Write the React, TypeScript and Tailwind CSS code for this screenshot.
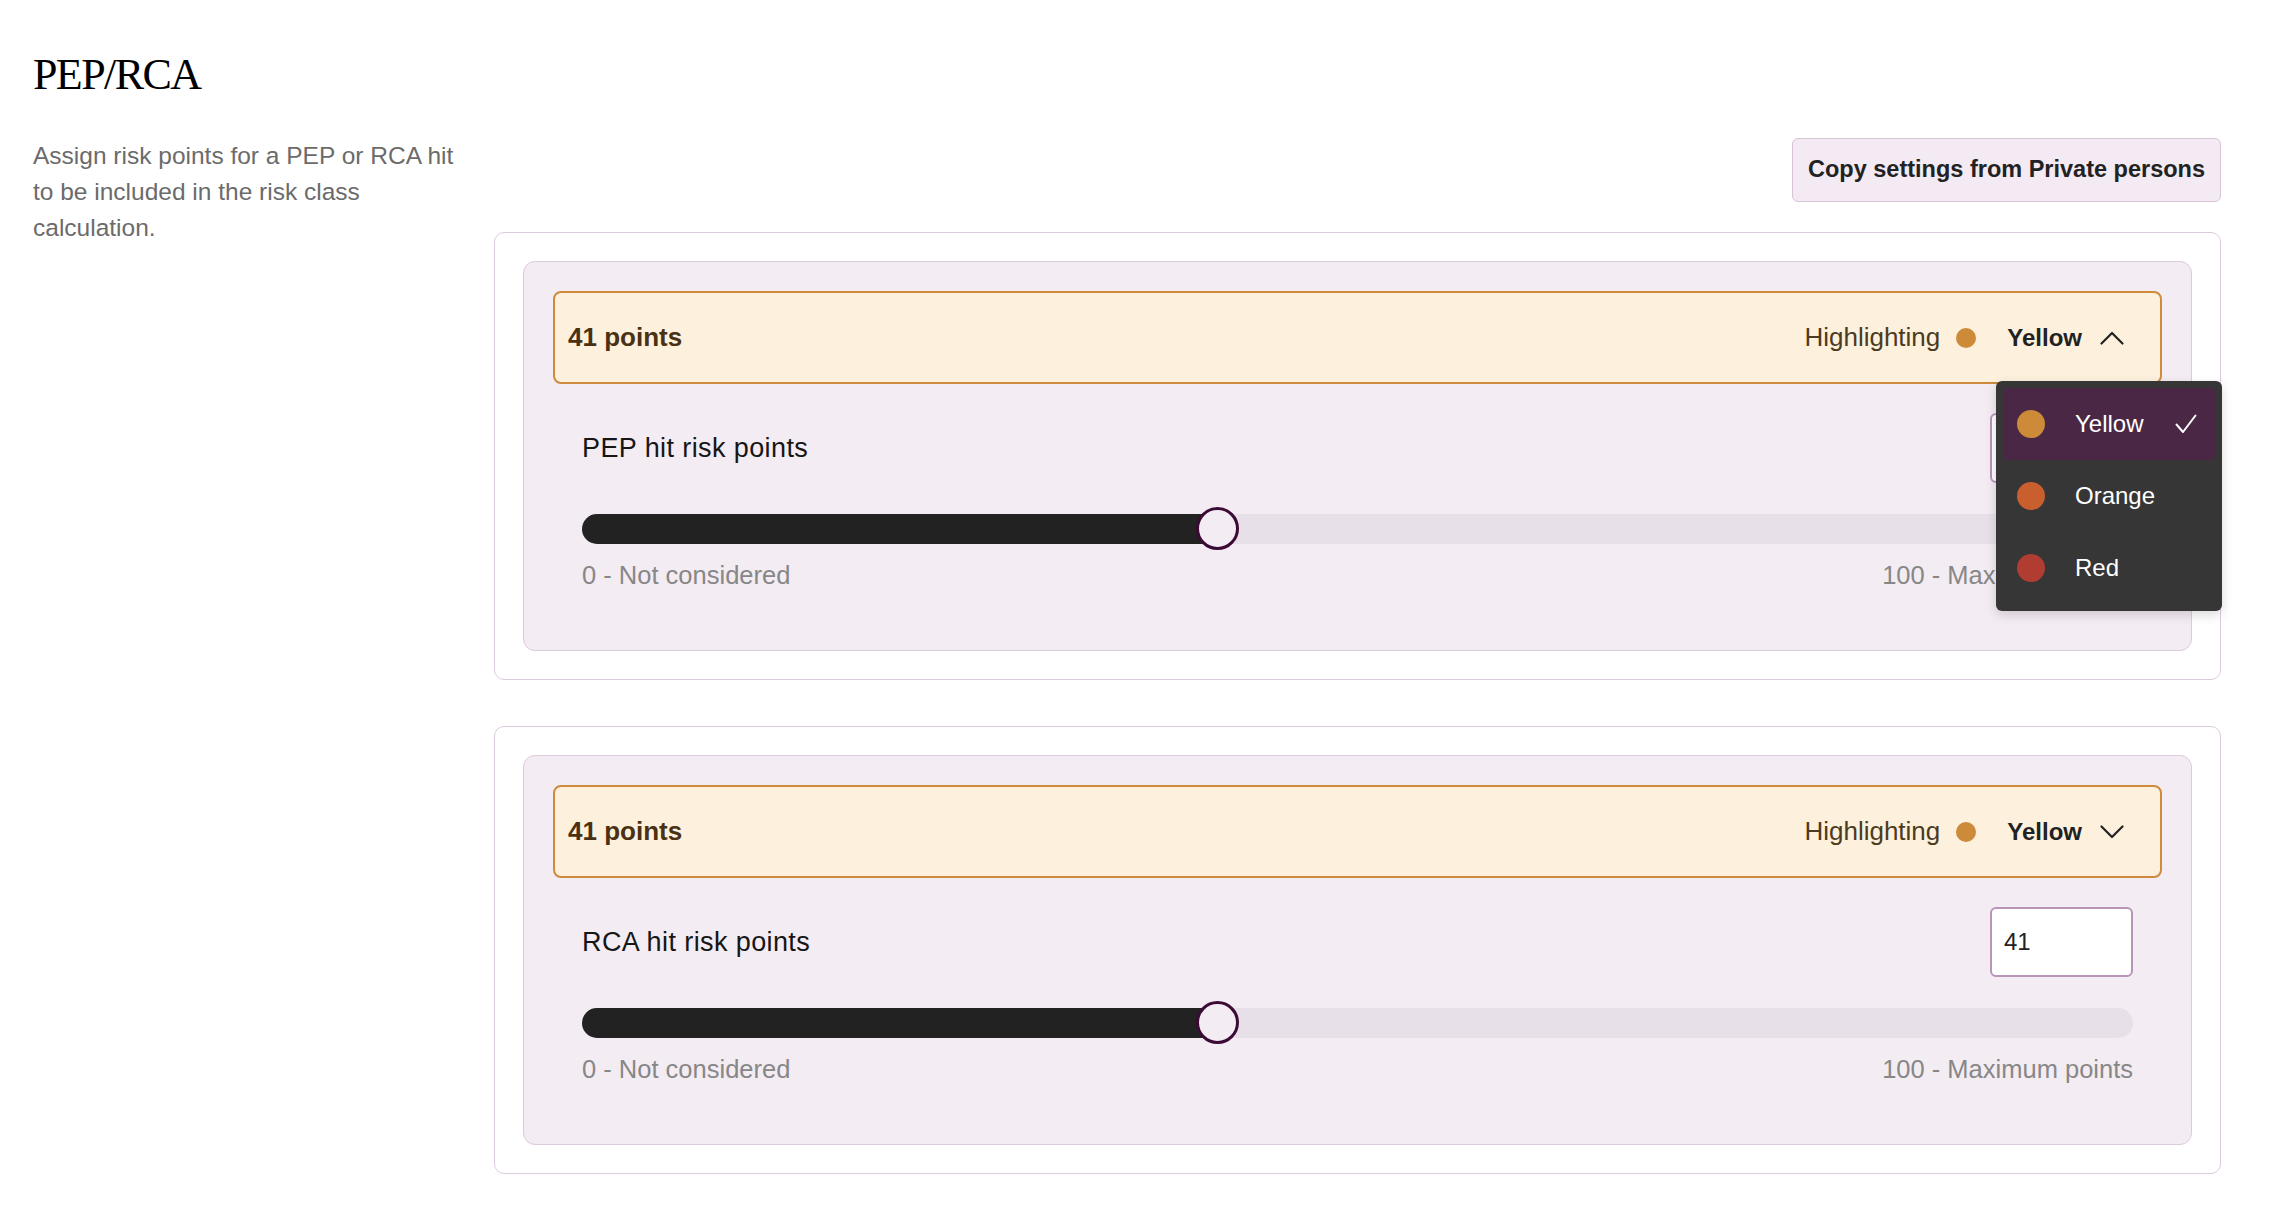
import React from "react";

type Opt = { name: string; color: string };
const OPTIONS: Opt[] = [
  { name: "Yellow", color: "#cd8a38" },
  { name: "Orange", color: "#c95f2f" },
  { name: "Red", color: "#b03c32" },
];

function Chevron({ up }: { up: boolean }) {
  return (
    <svg width="24" height="14" viewBox="0 0 24 14" fill="none" className="shrink-0">
      <path
        d={up ? "M1.5 12.5 L12 2 L22.5 12.5" : "M1.5 1.5 L12 12 L22.5 1.5"}
        stroke="#222"
        strokeWidth="2.2"
        strokeLinecap="round"
        strokeLinejoin="round"
      />
    </svg>
  );
}

function Check() {
  return (
    <svg width="22" height="20" viewBox="0 0 22 20" fill="none" className="shrink-0">
      <path d="M1.5 10.5 L8 18 L20.5 1.5" stroke="#ffffff" strokeWidth="2" strokeLinecap="round" strokeLinejoin="round" />
    </svg>
  );
}

function Menu() {
  return (
    <div className="absolute top-[88px] right-[-62px] z-20 w-[226px] rounded-[6px] bg-[#363636] p-[7px] shadow-[0_4px_12px_rgba(0,0,0,0.15)]">
      {OPTIONS.map((o, i) => (
        <div
          key={o.name}
          className={
            "flex h-[72px] items-center rounded-[5px] pl-[14px] pr-[18px] " +
            (i === 0 ? "bg-[#4a2745]" : "")
          }
        >
          <span className="h-[28px] w-[28px] shrink-0 rounded-full" style={{ backgroundColor: o.color }} />
          <span className="ml-[30px] text-[24px] text-white">{o.name}</span>
          {i === 0 && (
            <span className="ml-auto flex">
              <Check />
            </span>
          )}
        </div>
      ))}
    </div>
  );
}

function RiskCard({ label, open }: { label: string; open: boolean }) {
  const value = 41;
  return (
    <div className="rounded-[10px] border border-[#dccbdc] bg-white p-[28px]">
      <div className="rounded-[12px] border border-[#dccbdc] bg-[#f3ecf3] p-[29px]">
        <div className="relative flex h-[93px] items-center justify-between rounded-[8px] border-2 border-[#cf8a3c] bg-[#fdf1de] pl-[13px] pr-[36px]">
          <span className="text-[26px] font-bold text-[#4a3113]">{value} points</span>
          <div className="flex items-center">
            <span className="text-[26px] text-[#4d3b1f]">Highlighting</span>
            <span className="ml-[16px] h-[20px] w-[20px] rounded-full bg-[#cd8a38]" />
            <span className="ml-[31px] text-[24px] font-bold text-[#222]">Yellow</span>
            <span className="ml-[18px] flex">
              <Chevron up={open} />
            </span>
          </div>
          {open && <Menu />}
        </div>
        <div className="flex flex-col px-[29px] pb-[28px] pt-[29px]">
          <div className="flex h-[70px] items-center justify-between">
            <span className="text-[27px] tracking-[0.4px] text-[#161616]">{label}</span>
            <div className="flex h-[70px] w-[143px] items-center rounded-[6px] border-2 border-[#b894b8] bg-white px-[12px] text-[24px] text-[#222]">
              {value}
            </div>
          </div>
          <div className="relative mt-[24px] flex h-[43px] items-center">
            <div className="relative h-[30px] w-full rounded-full bg-[#e7e0e9]">
              <div className="absolute left-0 top-0 h-full rounded-full bg-[#222222]" style={{ width: `${value}%` }} />
            </div>
            <div
              className="absolute top-0 h-[43px] w-[43px] rounded-full border-[3px] border-[#3b0a35] bg-[#f3ecf3]"
              style={{ left: `calc(${value}% - 21.5px)` }}
            />
          </div>
          <div className="mt-[7px] flex justify-between text-[25.5px] leading-[36px] text-[#878787]">
            <span>0 - Not considered</span>
            <span>100 - Maximum points</span>
          </div>
        </div>
      </div>
    </div>
  );
}

export default function App() {
  return (
    <div className="min-h-screen bg-white font-['Liberation_Sans',Arial,sans-serif]">
      <div className="pl-[33px] pr-[49px] pt-[48px]">
        <h1 className="font-['Liberation_Serif','Times_New_Roman',serif] text-[44px] leading-[53px] tracking-[-1.6px] text-black">
          PEP/RCA
        </h1>
        <div className="mt-[37px] flex">
          <div className="w-[461px] shrink-0">
            <p className="w-[436px] text-[24.5px] leading-[36px] text-[#6b6b6b]">
              Assign risk points for a PEP or RCA hit to be included in the risk class calculation.
            </p>
          </div>
          <div className="flex flex-1 flex-col">
            <button className="flex h-[64px] w-[429px] items-center justify-center self-end rounded-[6px] border border-[#d9c3d9] bg-[#f3eaf3] text-[23.5px] font-bold text-[#222]">
              Copy settings from Private persons
            </button>
            <div className="mt-[30px] flex flex-col gap-[46px]">
              <RiskCard label="PEP hit risk points" open={true} />
              <RiskCard label="RCA hit risk points" open={false} />
            </div>
          </div>
        </div>
      </div>
    </div>
  );
}
